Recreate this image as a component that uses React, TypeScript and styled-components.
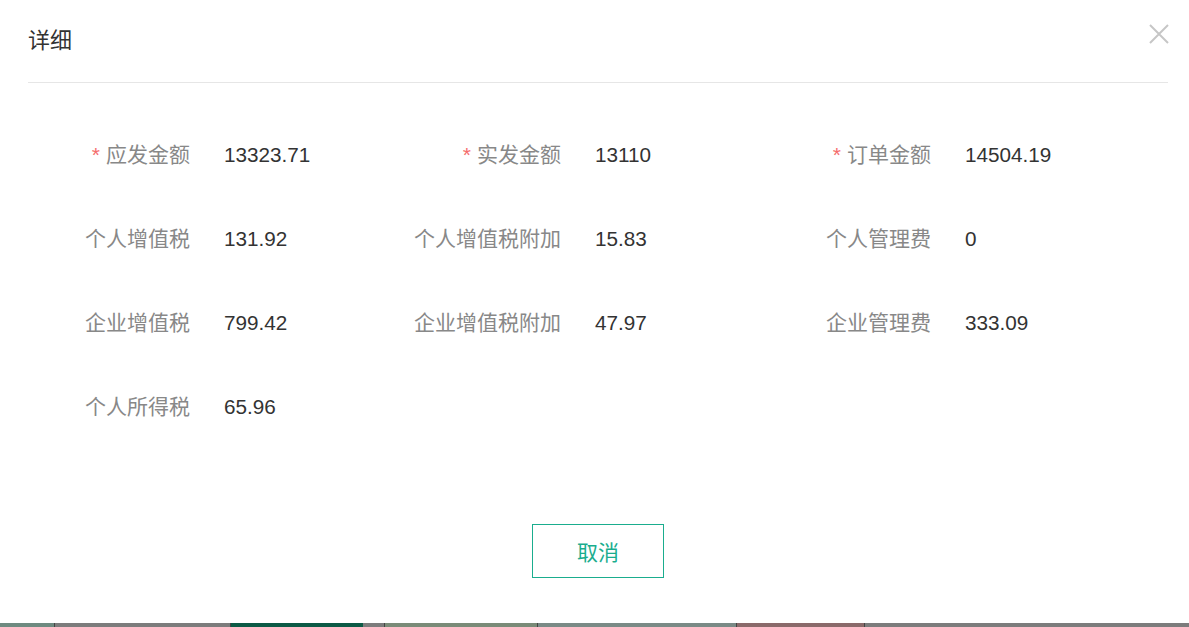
import React from "react";
import styled, { createGlobalStyle } from "styled-components";

const Global = createGlobalStyle`
  html, body { margin: 0; padding: 0; background: #fff; }
  body { font-family: Arial, "Liberation Sans", "Noto Sans CJK SC", sans-serif; }
  * { box-sizing: border-box; }
`;

const Page = styled.div`
  width: 1189px;
  height: 627px;
  display: flex;
  flex-direction: column;
  overflow: hidden;
`;

const Dialog = styled.div`
  height: 623px;
  flex-shrink: 0;
  background: #fff;
  display: flex;
  flex-direction: column;
  position: relative;
`;

const Header = styled.div`
  flex-shrink: 0;
  margin: 0 21px 0 28px;
  height: 83px;
  border-bottom: 1px solid #e6e6e6;
  display: flex;
  align-items: center;
  padding-bottom: 7px;
`;

const Title = styled.h2`
  margin: 0;
  font-weight: normal;
  font-size: 22px;
  color: #333;
  font-family: "Liberation Sans", "Noto Sans CJK SC", sans-serif;
`;

const Close = styled.button`
  position: absolute;
  top: 23px;
  right: 19px;
  width: 22px;
  height: 22px;
  border: 0;
  padding: 0;
  background: transparent;
  cursor: pointer;
  display: flex;
  align-items: center;
  justify-content: center;
`;

const Body = styled.div`
  flex-shrink: 0;
  padding: 52px 0 0 28px;
  display: grid;
  grid-template-columns: 371px 370px 370px;
  grid-auto-rows: 84px;
`;

const Field = styled.div`
  display: flex;
  align-items: flex-start;
  height: 84px;
`;

const Label = styled.div`
  width: 162px;
  text-align: right;
  font-size: 21px;
  line-height: 40px;
  color: #888;
  font-family: "Liberation Sans", "Noto Sans CJK SC", sans-serif;
`;

const Star = styled.span`
  color: #f56c6c;
  margin-right: 6px;
`;

const Value = styled.div`
  margin-left: 34px;
  font-size: 20.7px;
  line-height: 40px;
  color: #333;
  font-family: "Liberation Sans", "Noto Sans CJK SC", sans-serif;
`;

const Footer = styled.div`
  flex-shrink: 0;
  display: flex;
  justify-content: center;
  padding-top: 53px;
  padding-left: 7px;
`;

const CancelButton = styled.button`
  width: 132px;
  height: 54px;
  border: 1px solid #1aad8e;
  background: #fff;
  color: #1aad8e;
  font-size: 21px;
  font-family: "Liberation Sans", "Noto Sans CJK SC", sans-serif;
  cursor: pointer;
`;

const Backdrop = styled.div`
  flex: 1;
  background: #7c7c7c;
  display: flex;
`;

const Seg = styled.div<{ $w: number; $bg?: string; $line?: boolean }>`
  width: ${(p) => p.$w}px;
  flex-shrink: 0;
  background: ${(p) => p.$bg || "transparent"};
  border-right: ${(p) => (p.$line ? "1px solid #444" : "0")};
`;

const fields: { label: string; value: string; req?: boolean }[] = [
  { label: "应发金额", value: "13323.71", req: true },
  { label: "实发金额", value: "13110", req: true },
  { label: "订单金额", value: "14504.19", req: true },
  { label: "个人增值税", value: "131.92" },
  { label: "个人增值税附加", value: "15.83" },
  { label: "个人管理费", value: "0" },
  { label: "企业增值税", value: "799.42" },
  { label: "企业增值税附加", value: "47.97" },
  { label: "企业管理费", value: "333.09" },
  { label: "个人所得税", value: "65.96" },
];

export default function App() {
  return (
    <Page>
      <Global />
      <Dialog>
        <Header>
          <Title>详细</Title>
        </Header>
        <Close aria-label="close">
          <svg width="20" height="20" viewBox="0 0 20 20">
            <path d="M1 1 L19 19 M19 1 L1 19" stroke="#c6c6c6" strokeWidth="2" />
          </svg>
        </Close>
        <Body>
          {fields.map((f) => (
            <Field key={f.label}>
              <Label>
                {f.req && <Star>*</Star>}
                {f.label}
              </Label>
              <Value>{f.value}</Value>
            </Field>
          ))}
        </Body>
        <Footer>
          <CancelButton>取消</CancelButton>
        </Footer>
      </Dialog>
      <Backdrop>
        <Seg $w={55} $bg="#6e8a80" $line />
        <Seg $w={176} $line />
        <Seg $w={132} $bg="#0c5a45" />
        <Seg $w={22} $line />
        <Seg $w={153} $bg="#7a8b78" $line />
        <Seg $w={199} $bg="#7a8a86" $line />
        <Seg $w={128} $bg="#8a6a6a" $line />
      </Backdrop>
    </Page>
  );
}
